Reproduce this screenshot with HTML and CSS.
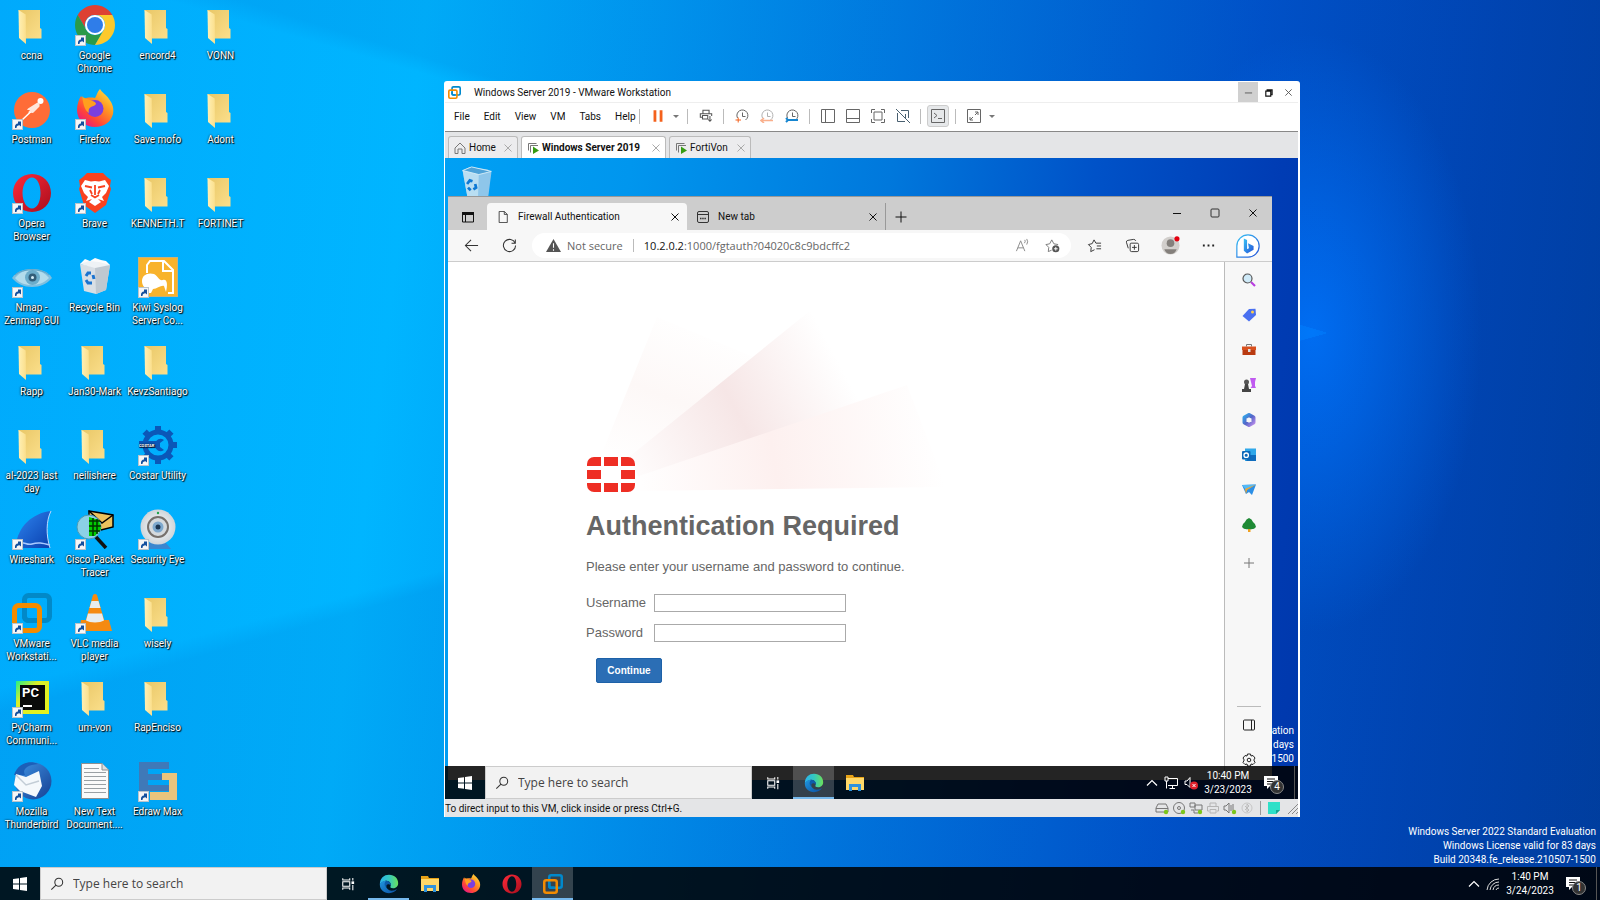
FILE: index.html
```html
<!DOCTYPE html>
<html lang="en">
<head>
  <meta charset="UTF-8">
  <meta name="viewport" content="width=device-width, initial-scale=1.0">
  <title>Desktop</title>
  <link rel="stylesheet" href="styles.css">
</head>
<body>
  <!-- Shared icons -->
  <svg class="sprite" aria-hidden="true">
    <defs>
      <linearGradient id="gFolder" x1="0" y1="0" x2="1" y2="1"><stop offset="0" stop-color="#e9c767"/><stop offset="1" stop-color="#fbdf8b"/></linearGradient>
      <linearGradient id="gFlap" x1="0" y1="0" x2="1" y2="0"><stop offset="0" stop-color="#fff0b5"/><stop offset="1" stop-color="#fbdf8c"/></linearGradient>
      <linearGradient id="gOpera" x1="0" y1="0" x2="1" y2="1"><stop offset="0" stop-color="#ff2b3a"/><stop offset="1" stop-color="#a80d1c"/></linearGradient>
      <linearGradient id="gFire" x1="1" y1="0" x2="0.2" y2="1"><stop offset="0" stop-color="#fff04a"/><stop offset="0.4" stop-color="#ff9a22"/><stop offset="0.75" stop-color="#ff4438"/><stop offset="1" stop-color="#e4158b"/></linearGradient>
      <linearGradient id="gFin" x1="0" y1="0" x2="1" y2="1"><stop offset="0" stop-color="#2f86f0"/><stop offset="1" stop-color="#0a3fae"/></linearGradient>
      <linearGradient id="gEdge1" x1="0" y1="0" x2="1" y2="0"><stop offset="0" stop-color="#2bb3ee"/><stop offset="0.5" stop-color="#34c9c0"/><stop offset="1" stop-color="#6be05a"/></linearGradient>
      <linearGradient id="gEdge2" x1="0" y1="0" x2="1" y2="1"><stop offset="0" stop-color="#1f97e0"/><stop offset="1" stop-color="#0c4fa0"/></linearGradient>
      <linearGradient id="gPy" x1="0" y1="0" x2="1" y2="1"><stop offset="0" stop-color="#21f08a"/><stop offset="0.35" stop-color="#d9ef2a"/><stop offset="1" stop-color="#e6f21c"/></linearGradient>
      <linearGradient id="gBird" x1="0" y1="0" x2="1" y2="1"><stop offset="0" stop-color="#3f95e6"/><stop offset="1" stop-color="#163f92"/></linearGradient>
      <linearGradient id="gBing" x1="0" y1="0" x2="1" y2="1"><stop offset="0" stop-color="#37c2f5"/><stop offset="1" stop-color="#2552d8"/></linearGradient>
      <linearGradient id="gOffice" x1="0" y1="0" x2="1" y2="1"><stop offset="0" stop-color="#33a4e8"/><stop offset="0.5" stop-color="#5465c8"/><stop offset="1" stop-color="#b58ae8"/></linearGradient>
      <radialGradient id="gCam"><stop offset="0" stop-color="#ffffff"/><stop offset="1" stop-color="#cfd5da"/></radialGradient>
    </defs>

    <symbol id="arrow" viewBox="0 0 11 11">
      <rect x="0.5" y="0.5" width="10" height="10" fill="#f6f6f6" stroke="#b9c4cc"/>
      <path d="M3 9C2.600 6 4 4.500 6 4.500V2.500H9V7.500L7.500 6.200C5.500 6.200 4.500 7 4.500 9Z" fill="#14509e"/>
    </symbol>
    <symbol id="folder" viewBox="0 0 40 40">
      <path d="M6.500 5H28V23L29.500 24V33.500H13Z" fill="url(#gFolder)"/>
      <path d="M6.500 5L13.700 9.500L14 39L7 33Z" fill="url(#gFlap)"/>
    </symbol>
    <symbol id="chrome" viewBox="0 0 40 40">
      <path d="M20 10H37.300A20 20 0 0 0 2.700 10L11.300 25A10 10 0 0 1 20 10Z" fill="#dd4033"/>
      <path d="M11.300 25L2.700 10A20 20 0 0 0 20 40L28.700 25A10 10 0 0 1 11.300 25Z" fill="#2a9a49"/>
      <path d="M28.700 25L20 40A20 20 0 0 0 37.300 10H20A10 10 0 0 1 28.700 25Z" fill="#fcc92d"/>
      <circle cx="20" cy="20" r="10" fill="#fff"/><circle cx="20" cy="20" r="8" fill="#2f7de9"/>
    </symbol>
    <symbol id="postman" viewBox="0 0 40 40">
      <circle cx="20" cy="21" r="18" fill="#ff6c37"/>
      <circle cx="28.500" cy="12" r="3" fill="#fff"/>
      <path d="M25.500 13.500L16 19.500L15 21L18 21L16 23.500L21 24L27.500 17.500V14.500Z" fill="#ffe6da"/>
      <path d="M18.500 23L9.500 31.500" stroke="#fff" stroke-width="1.500"/>
    </symbol>
    <symbol id="firefox" viewBox="0 0 40 40">
      <path d="M25 0C27 4 31 5 34 10C38 15 39 20 38 25C36 33 29 38 20 38C10 38 2 31 2 21C2 15 4 10 6 7C7 8 7 9 8 10C10 9 15 8 20 9C22 6 22 3 25 0Z" fill="url(#gFire)"/>
      <circle cx="20" cy="19.500" r="8.500" fill="#7a3fe0"/>
      <path d="M7 7C9 10 12 9 15 11C18 12 21 13 21 15C20 17 17 17 16 18C14 19 13 21 14 24C9 21 8 13 7 7Z" fill="#ffa01e"/>
    </symbol>
    <symbol id="opera" viewBox="0 0 40 40">
      <path fill-rule="evenodd" d="M20 1C9 1 1 9.500 1 20S9 39 20 39S39 30.500 39 20S31 1 20 1ZM20 4.500C25 4.500 28.500 11 28.500 20S25 35.500 20 35.500S10.500 29 10.500 20S15 4.500 20 4.500Z" fill="url(#gOpera)"/>
    </symbol>
    <symbol id="brave" viewBox="0 0 40 40">
      <path d="M12 0H28L32 4L36 7L35 13L36 16L31 32L20 40L9 32L4 16L5 13L4 7L8 4Z" fill="#f9421f"/>
      <path d="M10 7L16 8.500L20 8L24 8.500L30 7L34 13L31 20L27 24L29 28L23 26L26 29L20 33L14 29L17 26L11 28L13 24L9 20L6 13Z" fill="#fff"/>
      <path d="M10 13L17 14.500M30 13L23 14.500M20 12V22M16 22L20 24.500L24 22M15 17L17 21M25 17L23 21" stroke="#f9421f" stroke-width="1.800" fill="none"/>
    </symbol>
    <symbol id="nmap" viewBox="0 0 40 40">
      <path d="M0 21C5 14 12 12 20 12S36 14 40 21C35 27 28 30 20 30S5 27 0 21Z" fill="#7fbfdf"/>
      <path d="M3 21C9 14 14 13 20 13S32 15 37 21C32 26 26 28 20 28S8 27 3 21Z" fill="#b3dcec"/>
      <circle cx="20.500" cy="20.500" r="7.500" fill="#6cadcb"/><circle cx="20.500" cy="20.500" r="4" fill="#325d78"/><circle cx="20.500" cy="20.500" r="1.500" fill="#d6eef8"/>
      <path d="M3 18C10 11 30 11 37 18" stroke="#5fa3c4" fill="none"/>
    </symbol>
    <symbol id="bin" viewBox="0 0 40 40">
      <path d="M5 7L10 2L15 4L20 1L26 3L31 4L35 8Z" fill="#fbfcfd"/>
      <path d="M5 7L20 10L35 8L31 33L21 37L9 34Z" fill="#d9dfe5"/>
      <path d="M20 10L35 8L31 33L21 37Z" fill="#bfc8d0"/>
      <path d="M5 7L14 4L24 5L35 8L20 11Z" fill="#eef2f5"/>
      <g fill="none" stroke="#1b73cf" stroke-width="3"><path d="M11 19L13 16H16"/><path d="M18 18L19 22"/><path d="M17 26H13L11 23"/></g>
    </symbol>
    <symbol id="binEmpty" viewBox="0 0 40 40">
      <path d="M4 5L12 1L32 4L36 7L32 38H10Z" fill="#8ec6ea"/>
      <path d="M4 5L22 9L21 38H10Z" fill="#b9def2"/>
      <path d="M4 5L14 1L36 6L22 9.500Z" fill="#4fa3d8" stroke="#d8eef8"/>
      <g fill="none" stroke="#0c78d4" stroke-width="3"><path d="M9 20L12 16L15 17"/><path d="M18 20L19 24L16 26"/><path d="M13 27L10 24"/></g>
    </symbol>
    <symbol id="kiwi" viewBox="0 0 40 40">
      <rect x="0.500" y="0.500" width="39" height="39" fill="#f8b32c" stroke="#c8b27a"/>
      <path d="M9 16V8L12 4H26L35 13V36H30M25 4V14H35" fill="none" stroke="#fff" stroke-width="2"/>
      <path d="M4 24C4 18 10 15 16 17C20 19 21 24 25 23C29 22 30 27 28 35L26 29C23 28 19 32 15 32L13 36H10V32C6 31 4 28 4 24Z" fill="#fff"/>
    </symbol>
    <symbol id="wireshark" viewBox="0 0 40 40">
      <path d="M4 36C6 18 20 4 39 2C34 12 34 26 38 39H4Z" fill="url(#gFin)"/>
      <path d="M39 2C34 12 34 26 38 39" stroke="#bfdcff" fill="none"/>
      <path d="M4 35C12 31 14 37 20 35S30 34 38 36" stroke="#a8c9ff" stroke-width="1.500" fill="none"/>
    </symbol>
    <symbol id="tracer" viewBox="0 0 40 40">
      <path d="M14 2L38 6V18L14 24Z" fill="#ecc25e" stroke="#000" stroke-width="1.500"/>
      <path d="M14 2L27 14L38 6" fill="none" stroke="#000" stroke-width="1.500"/>
      <circle cx="14" cy="18" r="12" fill="#8bd0e6" stroke="#4c9ab5"/>
      <path d="M14 8L24 11L26 20L20 27H14Z" fill="#0c0"/>
      <path d="M14 12H25M14 17H26M14 22H25M18 9V27M22 10V25" stroke="#030" stroke-width="1.500"/>
      <path d="M21 28L31 39" stroke="#111" stroke-width="3.500"/>
    </symbol>
    <symbol id="eye" viewBox="0 0 40 40">
      <path d="M10 34H28L33 40H6Z" fill="#3a86cf"/>
      <circle cx="20" cy="18" r="17.500" fill="url(#gCam)"/>
      <circle cx="20" cy="18" r="10" fill="#d5dade" stroke="#76706c" stroke-width="2"/>
      <circle cx="20" cy="18" r="5.500" fill="#7da8ce"/><circle cx="20" cy="18" r="2.500" fill="#1b3552"/><circle cx="20" cy="4" r="1.200" fill="#1da34a"/>
    </symbol>
    <symbol id="vmware" viewBox="0 0 40 40">
      <rect x="12.500" y="2.500" width="25" height="25" rx="4" fill="none" stroke="var(--back, #0089cc)" stroke-width="5"/>
      <rect x="2.500" y="12.500" width="25" height="25" rx="4" fill="none" stroke="#f38b00" stroke-width="5"/>
      <path d="M12.500 18V23.500A4 4 0 0 0 16.500 27.500H23" fill="none" stroke="var(--back, #0089cc)" stroke-width="5"/>
    </symbol>
    <symbol id="vlc" viewBox="0 0 40 40">
      <path d="M6 27H34L37 38H4Z" fill="#f58a12"/>
      <path d="M18 2C19 0.500 21 0.500 22 2L30 30C26 34 14 34 10 30Z" fill="#f58a12"/>
      <path d="M16.500 8H23.500L25.500 15H14.500ZM13 20.500H27L29 27.500C25 30 15 30 11 27.500Z" fill="#e8edf0"/>
    </symbol>
    <symbol id="thunderbird" viewBox="0 0 40 40">
      <circle cx="21" cy="20" r="18.500" fill="url(#gBird)"/>
      <path d="M2 14C6 2 18 -1 26 3C14 4 10 9 13 14Z" fill="#1c5fb8"/>
      <path d="M4 13L14 16L27 10L30 25L24 36L8 30L2 24Z" fill="#f5f9fc"/>
      <path d="M4 14L14 24L27 20" fill="none" stroke="#c3cdd6" stroke-width="1.500"/>
    </symbol>
    <symbol id="textdoc" viewBox="0 0 40 40">
      <path d="M6.500 2.500H27L33.500 9V37.500H6.500Z" fill="#fafafa" stroke="#8c8f91"/>
      <path d="M27 2.500V9H33.500" fill="#ddd" stroke="#8c8f91"/>
      <path d="M9 7.500H24M9 11.500H31M9 15.500H31M9 19.500H31M9 23.500H31M9 27.500H31M9 31.500H31" stroke="#9aa0a4"/>
    </symbol>
    <symbol id="edraw" viewBox="0 0 40 40">
      <path d="M1 1H31V8H10V13H24V19H10V24H31V30H1Z" fill="#3f79b8"/>
      <path d="M24 12H39V39H12V31H31V19H24Z" fill="#eac47c"/>
    </symbol>
    <symbol id="winlogo" viewBox="0 0 16 16">
      <path d="M1 3L7 2.200V7.500H1ZM8 2L15 1V7.500H8ZM1 8.500H7V13.800L1 13ZM8 8.500H15V15L8 14Z" fill="#fff"/>
    </symbol>
    <symbol id="lens" viewBox="0 0 16 16">
      <circle cx="10" cy="6" r="4.500" fill="none" stroke="#333" stroke-width="1.200"/><path d="M6.800 9.200L1.500 14.500" stroke="#333" stroke-width="1.200"/>
    </symbol>
    <symbol id="taskview" viewBox="0 0 16 16">
      <path d="M2 1.500V3.500H10V1.500M2 14.500V12.500H10V14.500M2 5.500H10V10.500H2ZM13.500 1V4M13.500 9V15" fill="none" stroke="#fff" stroke-width="1.200"/><rect x="12" y="5" width="3" height="3" fill="#fff"/>
    </symbol>
    <symbol id="edge" viewBox="0 0 24 24">
      <path d="M1 13C1 5 6 1 12 1C19 1 23 6 23 11C23 15 20 17 17 17C14 17 13 16 14 14C15 12 13 8 9 8C5 8 2 11 1 13Z" fill="url(#gEdge1)"/>
      <path d="M1 13C2 9 5 8 9 8C7 10 7 19 15 20C18 20 20 19 21.500 18C20 21 16 23 12 23C6 23 1 19 1 13Z" fill="url(#gEdge2)"/>
      <path d="M9 8C13 8 15 12 14 14C12 11 8 12 9 16C6 14 6 10 9 8Z" fill="#0d5cab"/>
    </symbol>
    <symbol id="explorer" viewBox="0 0 20 18">
      <path d="M1 1H8L9 3H19V16H1Z" fill="#e8a317"/><path d="M1 4H19V16H1Z" fill="#ffd868"/>
      <path d="M4 17V10H16V17H13V13H7V17Z" fill="#2f93dc"/>
    </symbol>
    <symbol id="chevron" viewBox="0 0 12 12"><path d="M1 8.500L6 3.500L11 8.500" fill="none" stroke="#fff" stroke-width="1.200"/></symbol>
    <symbol id="note" viewBox="0 0 14 14">
      <path d="M0 0H14V10H6L3 13V10H0Z" fill="#fff"/><path d="M3 3H11M3 5.500H11M3 8H8" stroke="#111"/>
    </symbol>
    <symbol id="cross" viewBox="0 0 10 10"><path d="M1.500 1.500L8.500 8.500M8.500 1.500L1.500 8.500" stroke="currentColor" fill="none"/></symbol>
    <symbol id="minus" viewBox="0 0 10 10"><path d="M1 5.500H9" stroke="currentColor"/></symbol>
    <symbol id="plus" viewBox="0 0 12 12"><path d="M0.500 6H11.500M6 0.500V11.500" stroke="currentColor"/></symbol>
    <symbol id="vmrun" viewBox="0 0 12 12">
      <path d="M1.500 8.500V1.500H9.500M3.500 10.500V3.500H11" fill="none" stroke="#777"/><path d="M6 4.500L12 8.500L6 12Z" fill="#359b12"/>
    </symbol>
    <symbol id="clock" viewBox="0 0 14 14">
      <path d="M2.500 9A5.500 5.500 0 1 1 10.500 11" fill="none" stroke="currentColor"/><path d="M7.500 3.500V7.500H10.500" fill="none" stroke="currentColor"/>
    </symbol>
  </svg>

  <main class="desktop">
    <ul class="icons">
      <li><svg><use href="#folder"/></svg><span>ccna</span></li>
      <li><svg><use href="#postman"/></svg><svg class="arrow"><use href="#arrow"/></svg><span>Postman</span></li>
      <li><svg><use href="#opera"/></svg><svg class="arrow"><use href="#arrow"/></svg><span>Opera<br>Browser</span></li>
      <li><svg><use href="#nmap"/></svg><svg class="arrow"><use href="#arrow"/></svg><span>Nmap -<br>Zenmap GUI</span></li>
      <li><svg><use href="#folder"/></svg><span>Rapp</span></li>
      <li><svg><use href="#folder"/></svg><span>al-2023 last<br>day</span></li>
      <li><svg><use href="#wireshark"/></svg><svg class="arrow"><use href="#arrow"/></svg><span>Wireshark</span></li>
      <li class="faded"><svg><use href="#vmware"/></svg><svg class="arrow"><use href="#arrow"/></svg><span>VMware<br>Workstati...</span></li>
      <li>
        <svg viewBox="0 0 40 40">
          <rect x="4" y="4" width="33" height="33" fill="url(#gPy)"/>
          <rect x="8" y="8" width="25" height="25" fill="#0a0c0a"/>
          <text x="10" y="20" class="pc-text">PC</text>
          <path d="M11 29H20" stroke="#fff" stroke-width="2"/>
        </svg>
        <svg class="arrow"><use href="#arrow"/></svg><span>PyCharm<br>Communi...</span>
      </li>
      <li><svg><use href="#thunderbird"/></svg><svg class="arrow"><use href="#arrow"/></svg><span>Mozilla<br>Thunderbird</span></li>

      <li><svg><use href="#chrome"/></svg><svg class="arrow"><use href="#arrow"/></svg><span>Google<br>Chrome</span></li>
      <li><svg><use href="#firefox"/></svg><svg class="arrow"><use href="#arrow"/></svg><span>Firefox</span></li>
      <li><svg><use href="#brave"/></svg><svg class="arrow"><use href="#arrow"/></svg><span>Brave</span></li>
      <li><svg><use href="#bin"/></svg><span>Recycle Bin</span></li>
      <li><svg><use href="#folder"/></svg><span>Jan30-Mark</span></li>
      <li><svg><use href="#folder"/></svg><span>neilishere</span></li>
      <li><svg><use href="#tracer"/></svg><svg class="arrow"><use href="#arrow"/></svg><span>Cisco Packet<br>Tracer</span></li>
      <li><svg><use href="#vlc"/></svg><svg class="arrow"><use href="#arrow"/></svg><span>VLC media<br>player</span></li>
      <li><svg><use href="#folder"/></svg><span>um-von</span></li>
      <li><svg><use href="#textdoc"/></svg><span>New Text<br>Document....</span></li>

      <li><svg><use href="#folder"/></svg><span>encord4</span></li>
      <li><svg><use href="#folder"/></svg><span>Save mofo</span></li>
      <li><svg><use href="#folder"/></svg><span>KENNETH.T</span></li>
      <li><svg><use href="#kiwi"/></svg><svg class="arrow"><use href="#arrow"/></svg><span>Kiwi Syslog<br>Server Co...</span></li>
      <li><svg><use href="#folder"/></svg><span>KevzSantiago</span></li>
      <li>
        <svg viewBox="0 0 40 40">
          <circle cx="20" cy="20" r="13" fill="none" stroke="#0b57b8" stroke-width="5"/>
          <path d="M20 1V6M20 34V39M34 20H39M6.600 6.600L10 10M33.400 6.600L30 10M33.400 33.400L30 30M6.600 33.400L10 30" stroke="#0b57b8" stroke-width="6"/>
          <path d="M26 15A6 6 0 1 0 26 25L22 22V18Z" fill="#0b57b8"/>
          <rect x="1" y="16" width="18" height="7" fill="#0b57b8"/>
          <text x="1" y="22" class="costar-text">COSTAR</text>
        </svg>
        <svg class="arrow"><use href="#arrow"/></svg><span>Costar Utility</span>
      </li>
      <li><svg><use href="#eye"/></svg><svg class="arrow"><use href="#arrow"/></svg><span>Security Eye</span></li>
      <li><svg><use href="#folder"/></svg><span>wisely</span></li>
      <li><svg><use href="#folder"/></svg><span>RapEnciso</span></li>
      <li><svg><use href="#edraw"/></svg><svg class="arrow"><use href="#arrow"/></svg><span>Edraw Max</span></li>

      <li><svg><use href="#folder"/></svg><span>VONN</span></li>
      <li><svg><use href="#folder"/></svg><span>Adont</span></li>
      <li><svg><use href="#folder"/></svg><span>FORTINET</span></li>
    </ul>

    <p class="watermark">Windows Server 2022 Standard Evaluation<br>Windows License valid for 83 days<br>Build 20348.fe_release.210507-1500</p>

    <!-- VMware window -->
    <section class="vm">
      <header class="vm-title">
        <svg class="vm-logo"><use href="#vmware"/></svg>
        <h2>Windows Server 2019 - VMware Workstation</h2>
        <div class="vm-controls">
          <button class="hover" aria-label="Minimize"><svg><use href="#minus"/></svg></button>
          <button aria-label="Restore"><svg viewBox="0 0 10 10"><path d="M2 3.500H7.500V9H2ZM3.500 3V2H9V7.500H8" fill="none" stroke="#111" stroke-width="1.300"/></svg></button>
          <button aria-label="Close"><svg><use href="#cross"/></svg></button>
        </div>
      </header>

      <nav class="vm-menu">
        <div class="menu-items">
          <button>File</button><button>Edit</button><button>View</button><button>VM</button><button>Tabs</button><button>Help</button>
        </div>
        <div class="tools">
          <button aria-label="Suspend"><svg viewBox="0 0 16 16"><path d="M4.500 1.500V14.500M11.500 1.500V14.500" stroke="#f4611c" stroke-width="3.200"/></svg></button>
          <button class="caret" aria-label="Power options"></button>
        </div>
        <div class="tools">
          <button aria-label="Send keys"><svg viewBox="0 0 16 16"><path d="M4.500 5V1.500H11.500V5M4 9.500H1.500V5.500H14.500V8M4 7.500H10V11.500H4ZM12.500 8V14M10.500 12L12.500 14L14.500 12" fill="none" stroke="#555" stroke-width="1.200"/></svg></button>
        </div>
        <div class="tools">
          <button aria-label="Take snapshot"><svg viewBox="0 0 14 14"><use href="#clock"/><path d="M0.500 11H6M3.200 8.500V13.500" stroke="#f4611c"/></svg></button>
          <button class="off" aria-label="Revert snapshot"><svg viewBox="0 0 14 14"><use href="#clock"/><path d="M1 11.500H13M4 9L1 11.500L4 14" stroke="#f4611c" stroke-width="1.500" fill="none"/></svg></button>
          <button aria-label="Manage snapshots"><svg viewBox="0 0 14 14"><use href="#clock"/><path d="M1 9L3 11L1 13M3 11H13" stroke="#1585d0" stroke-width="2" fill="none"/></svg></button>
        </div>
        <div class="tools">
          <button aria-label="Library"><svg viewBox="0 0 14 14"><path d="M0.500 0.500H13.500V13.500H0.500ZM4.500 0.500V13.500" fill="none" stroke="currentColor"/></svg></button>
          <button aria-label="Thumbnail bar"><svg viewBox="0 0 14 14"><path d="M0.500 0.500H13.500V13.500H0.500ZM0.500 9.500H13.500" fill="none" stroke="currentColor"/></svg></button>
          <button aria-label="Full screen"><svg viewBox="0 0 14 14"><path d="M3 3H11V11H3ZM0.500 4V0.500H4M10 0.500H13.500V4M13.500 10V13.500H10M4 13.500H0.500V10" fill="none" stroke="currentColor"/></svg></button>
          <button aria-label="Unity"><svg viewBox="0 0 14 14"><path d="M5 1.500H12.500V9M1.500 4V12.500H9M9.500 5V9M0 0L14 14" fill="none" stroke="#496070"/></svg></button>
        </div>
        <div class="tools">
          <button class="pressed" aria-label="Console view"><svg viewBox="0 0 14 14"><path d="M0.500 0.500H13.500V13.500H0.500ZM3 4L6 6.500L3 9M7 9.500H11" fill="none" stroke="currentColor"/></svg></button>
        </div>
        <div class="tools">
          <button aria-label="Stretch guest"><svg viewBox="0 0 14 14"><path d="M0.500 0.500H13.500V13.500H0.500ZM3 11L6 8M8 6L11 3M8 3H11V6M3 8V11H6" fill="none" stroke="currentColor"/></svg></button>
          <button class="caret" aria-label="Stretch options"></button>
        </div>
      </nav>

      <div class="vm-tabs">
        <div class="vm-tab"><svg viewBox="0 0 12 12"><path d="M1 6L6 1L11 6V11.500H8V7H4V11.500H1Z" fill="none" stroke="#777"/></svg><span>Home</span><button aria-label="Close"><svg><use href="#cross"/></svg></button></div>
        <div class="vm-tab current"><svg><use href="#vmrun"/></svg><span>Windows Server 2019</span><button aria-label="Close"><svg><use href="#cross"/></svg></button></div>
        <div class="vm-tab"><svg><use href="#vmrun"/></svg><span>FortiVon</span><button aria-label="Close"><svg><use href="#cross"/></svg></button></div>
      </div>

      <!-- Guest screen -->
      <div class="guest">
        <svg class="guest-bin"><use href="#binEmpty"/></svg>
        <p class="guest-mark">ation<br>days<br>-1500</p>

        <div class="browser">
          <div class="strip">
            <button class="tab-menu" aria-label="Tab actions"><svg viewBox="0 0 12 12"><path d="M0.500 1.500H11.500V11H0.500ZM3.500 4V11" fill="none" stroke="#111"/><path d="M0 1H12V4H0Z" fill="#111"/></svg></button>
            <div class="tab current"><svg viewBox="0 0 12 14"><path d="M1.500 0.500H7.500L11 4V13.500H1.500ZM7.500 0.500V4H11" fill="none" stroke="#333"/></svg><span>Firewall Authentication</span><button aria-label="Close tab"><svg><use href="#cross"/></svg></button></div>
            <div class="tab"><svg viewBox="0 0 12 12"><rect x="0.500" y="0.500" width="11" height="11" rx="1.500" fill="none" stroke="#333"/><path d="M0.500 3.500H11.500" stroke="#333"/><path d="M3 7.500H9" stroke="#333" stroke-width="1.500" stroke-dasharray="1.500 0.700"/></svg><span>New tab</span><button aria-label="Close tab"><svg><use href="#cross"/></svg></button></div>
            <button class="new-tab" aria-label="New tab"><svg><use href="#plus"/></svg></button>
            <div class="win-controls">
              <button aria-label="Minimize"><svg><use href="#minus"/></svg></button>
              <button aria-label="Maximize"><svg viewBox="0 0 10 10"><rect x="1" y="1" width="8" height="8" rx="1" fill="none" stroke="#333"/></svg></button>
              <button aria-label="Close"><svg><use href="#cross"/></svg></button>
            </div>
          </div>

          <div class="nav">
            <button aria-label="Back"><svg viewBox="0 0 16 16"><path d="M15 8H1.500M7.500 2L1.500 8L7.500 14" fill="none" stroke="#333" stroke-width="1.100"/></svg></button>
            <button aria-label="Refresh"><svg viewBox="0 0 16 16"><path d="M14 5.500A6.500 6.500 0 1 0 14.500 8M14.200 1.500V5.500H10.200" fill="none" stroke="#333" stroke-width="1.100"/></svg></button>
            <div class="address">
              <svg viewBox="0 0 14 14"><path d="M7 1L14 13H0Z" fill="#555"/><path d="M7 5V9M7 10.500V12" stroke="#fff"/></svg>
              <span class="insecure">Not secure</span>
              <span class="url"><b>10.2.0.2</b>:1000/fgtauth?04020c8c9bdcffc2</span>
              <button aria-label="Read aloud"><svg viewBox="0 0 16 16"><path d="M1.500 14L6 3L10.500 14M3 10.500H9M10 5.500Q11.500 4 10.500 2M12.500 7Q14.500 4 12.500 1" fill="none" stroke="#888"/></svg></button>
              <button aria-label="Add favorite"><svg viewBox="0 0 16 16"><path d="M7 13L3.500 14.500L4 10L1 7L5 6.200L7.200 2L9.500 6.200L14 7" fill="none" stroke="#777"/><circle cx="11.500" cy="11.500" r="3.800" fill="#555"/><path d="M9.500 11.500H13.500M11.500 9.500V13.500" stroke="#fff"/></svg></button>
            </div>
            <button aria-label="Favorites"><svg viewBox="0 0 16 16"><path d="M8 12.500L4 14.500L4.500 10L1.500 7L5.500 6L7.500 2L9.500 5.500H15M10.500 8.500H15M10 11.500H15" fill="none" stroke="#333"/></svg></button>
            <button aria-label="Collections"><svg viewBox="0 0 16 16"><path d="M6.500 5.500H13Q14.500 5.500 14.500 7V13Q14.500 14.500 13 14.500H7Q5.500 14.500 5.500 13V6.500Q5.500 5.500 6.500 5.500ZM10 7.500V12.500M7.500 10H12.500M3.500 11L1.500 4.500Q1.200 3 3 2.500L9 1.500Q11 1.500 11.500 3" fill="none" stroke="#333"/></svg></button>
            <button class="profile" aria-label="Profile"><svg viewBox="0 0 20 20"><circle cx="10" cy="10" r="9.500" fill="#d2cfcc"/><circle cx="10" cy="7.500" r="4" fill="#84807c"/><path d="M3.500 14H16.500Q15 19 10 19T3.500 14Z" fill="#84807c"/><circle cx="16.800" cy="3" r="2.700" fill="#e3000f"/></svg></button>
            <button aria-label="More"><svg viewBox="0 0 16 16"><path d="M2 8H4M7 8H9M12 8H14" stroke="#222" stroke-width="2"/></svg></button>
            <button class="bing" aria-label="Discover"><svg viewBox="0 0 28 28"><path d="M2 26V14A12 12 0 1 1 14 26Z" fill="#fff" stroke="url(#gBing)" stroke-width="1.300"/><path d="M9.500 6L13 7.500V17.500L9.500 19ZM14 11L20 14V18L13 22L9.500 19L15 16.500Z" fill="url(#gBing)"/></svg></button>
          </div>

          <div class="view">
            <div class="page">
              <svg class="hero" viewBox="0 0 370 190">
                <defs>
                  <linearGradient id="ray1" gradientUnits="userSpaceOnUse" x1="50" y1="170" x2="110" y2="20"><stop offset="0" stop-color="#fff"/><stop offset="0.500" stop-color="#fdf8f7"/><stop offset="1" stop-color="#fff"/></linearGradient>
                  <linearGradient id="ray2" gradientUnits="userSpaceOnUse" x1="50" y1="162" x2="250" y2="55"><stop offset="0" stop-color="#fefbfb"/><stop offset="0.500" stop-color="#f6e6e6"/><stop offset="0.750" stop-color="#fbf3f3"/><stop offset="1" stop-color="#fff"/></linearGradient>
                  <linearGradient id="ray3" gradientUnits="userSpaceOnUse" x1="55" y1="180" x2="350" y2="130"><stop offset="0" stop-color="#fffefe"/><stop offset="0.450" stop-color="#fdf0ef"/><stop offset="1" stop-color="#fff"/></linearGradient>
                  <clipPath id="round"><rect x="1" y="155" width="48" height="35" rx="7"/></clipPath>
                </defs>
                <path d="M16 151L71 15L180 60L66 170Z" fill="url(#ray1)"/>
                <path d="M43 155L225 8L280 105L55 180Z" fill="url(#ray2)"/>
                <path d="M50 175L321 83L360 185L50 189Z" fill="url(#ray3)"/>
                <path clip-path="url(#round)" d="M1 155H15V164H1ZM18 155H32V164H18ZM35 155H49V164H35ZM1 168H15V177H1ZM35 168H49V177H35ZM1 181H15V190H1ZM18 181H32V190H18ZM35 181H49V190H35Z" fill="#ee2e24"/>
              </svg>
              <h1>Authentication Required</h1>
              <p>Please enter your username and password to continue.</p>
              <form>
                <div class="field"><label for="username">Username</label><input type="text" id="username"></div>
                <div class="field"><label for="password">Password</label><input type="password" id="password"></div>
                <button type="button">Continue</button>
              </form>
            </div>
            <aside class="side">
              <button aria-label="Search"><svg viewBox="0 0 14 14"><path d="M9 9L13 13" stroke="#b83de0" stroke-width="2.200"/><circle cx="5.500" cy="5.500" r="4.500" fill="#cfeaf8" stroke="#555" stroke-width="1.200"/></svg></button>
              <button aria-label="Shopping"><svg viewBox="0 0 14 14"><path d="M7 1L13.500 0.800L14 7L7 13.500L0.500 8Z" fill="#4a70f0"/><circle cx="10.500" cy="4" r="1.500" fill="#ffcf48"/></svg></button>
              <button aria-label="Tools"><svg viewBox="0 0 14 14"><path d="M4.500 3.500V1.500H9.500V3.500" fill="none" stroke="#777"/><path d="M0 3.500H14V7H0Z" fill="#d8501e"/><path d="M0.500 7H13.500V12H0.500Z" fill="#b93a10"/><rect x="6" y="6" width="2.500" height="3" fill="#ddd"/></svg></button>
              <button aria-label="Games"><svg viewBox="0 0 14 14"><circle cx="4.500" cy="4" r="2.500" fill="#555"/><path d="M3 6H6L7 11H9V14H0V11H2Z" fill="#444"/><path d="M8 0H14L13 4V8L14 10H8.500L10 8L9 4Z" fill="#c05af0"/></svg></button>
              <button aria-label="Microsoft 365"><svg viewBox="0 0 14 14"><path d="M7 2L11.500 4.500V9.500L7 12L2.500 9.500V4.500Z" fill="none" stroke="url(#gOffice)" stroke-width="4" stroke-linejoin="round"/></svg></button>
              <button aria-label="Outlook"><svg viewBox="0 0 14 14"><rect x="3" y="0.500" width="11" height="12.500" fill="#2fa8ea"/><path d="M8 7H14V13H4Z" fill="#0f6cbd"/><rect x="0" y="3" width="8.500" height="8.500" rx="1" fill="#0d67b8"/><circle cx="4.200" cy="7.200" r="2.200" fill="none" stroke="#fff" stroke-width="1.300"/></svg></button>
              <button aria-label="Drop"><svg viewBox="0 0 14 14"><path d="M0 2L14 1.500L10 12L7 9L4 11Z" fill="#2c8fe6"/><path d="M0 2L14 1.500L4 7Z" fill="#55b9f5"/><path d="M14 1.500L5 7L4 11L3 6Z" fill="#f4a62a"/></svg></button>
              <button aria-label="E-tree"><svg viewBox="0 0 14 14"><path d="M6 10H8.500V14H6Z" fill="#f0a020"/><path d="M7 0Q10 1 11 4Q14 6 14 9Q12 12 7 11Q2 12 0 9Q0 6 3 4Q4 1 7 0Z" fill="#1f8a35"/></svg></button>
              <button class="add" aria-label="Customize"><svg viewBox="0 0 14 14"><path d="M2 7H12M7 2V12" stroke="#777"/></svg></button>
              <div class="side-end">
                <button aria-label="Hide sidebar"><svg viewBox="0 0 14 14"><rect x="1.500" y="2" width="11" height="10" rx="1" fill="none" stroke="#222"/><path d="M9.500 2V12" stroke="#222"/></svg></button>
                <button aria-label="Settings"><svg viewBox="0 0 14 14"><path d="M5.500 1H8.500L9 3L11 2.500L13 5L11.800 7L13 9.500L11 11.500L9 11L8.500 13H5.500L5 11L3 11.500L1 9.500L2.200 7L1 5L3 2.500L5 3Z" fill="none" stroke="#222"/><circle cx="7" cy="7" r="1.800" fill="none" stroke="#222"/></svg></button>
              </div>
            </aside>
          </div>
        </div>

        <div class="taskbar">
          <button class="start" aria-label="Start"><svg><use href="#winlogo"/></svg></button>
          <label class="search"><svg><use href="#lens"/></svg><input type="text" placeholder="Type here to search"></label>
          <button class="app" aria-label="Task view"><svg class="small"><use href="#taskview"/></svg></button>
          <button class="app active" aria-label="Edge"><svg><use href="#edge"/></svg></button>
          <button class="app" aria-label="File Explorer"><svg><use href="#explorer"/></svg></button>
          <div class="tray">
            <svg class="up"><use href="#chevron"/></svg>
            <svg viewBox="0 0 14 14"><path d="M4 2.500H13.500V9.500H4M1 1H4V5H1ZM2.500 5V12.500M8.500 9.500V12.500M5.500 12.500H11" fill="none" stroke="#fff"/></svg>
            <svg viewBox="0 0 14 14"><path d="M1 5H3L6 1.500V11.500L3 8.500H1Z" fill="none" stroke="#fff"/><circle cx="10" cy="9.500" r="4" fill="#e0202c"/><path d="M8.500 8L11.500 11M11.500 8L8.500 11" stroke="#fff"/></svg>
            <time>10:40 PM<br>3/23/2023</time>
            <div class="notes"><svg><use href="#note"/></svg><span>4</span></div>
          </div>
        </div>
      </div>

      <footer class="vm-status">
        <span>To direct input to this VM, click inside or press Ctrl+G.</span>
        <div class="devices">
          <svg viewBox="0 0 14 14"><path d="M3 3H11L13 7V11H1V7ZM1 7.500H13" fill="none" stroke="#777"/><circle cx="11" cy="11" r="2.200" fill="#7cc61a"/></svg>
          <svg viewBox="0 0 14 14"><circle cx="7" cy="7" r="5.500" fill="none" stroke="#777"/><circle cx="7" cy="7" r="1.500" fill="none" stroke="#777"/><circle cx="11" cy="11" r="2.200" fill="#7cc61a"/></svg>
          <svg viewBox="0 0 14 14"><path d="M1 2H6V6H1ZM6 4H13V9H6ZM2 9H5V12H9" fill="none" stroke="#777"/><circle cx="11" cy="11" r="2.200" fill="#7cc61a"/></svg>
          <svg viewBox="0 0 14 14"><path d="M4 5V2H10V5M3 10H1.500V5.500H12.500V10H11M4 8.500H10V12H4Z" fill="none" stroke="#b4b4b4"/></svg>
          <svg viewBox="0 0 14 14"><path d="M1 5H3L6 2V12L3 9H1ZM8 4V10M10 3V9" fill="none" stroke="#777"/><circle cx="11" cy="11" r="2.200" fill="#7cc61a"/></svg>
          <svg viewBox="0 0 14 14"><circle cx="7" cy="7" r="5" fill="none" stroke="#c6c6c6"/><path d="M5 5L9 9L7 11V3L9 5L5 9" fill="none" stroke="#bbb"/></svg>
          <svg class="message" viewBox="0 0 14 14"><path d="M1 1H13V9L9 13H1Z" fill="#2fe0c8"/><path d="M13 9H9V13Z" fill="#17a592"/></svg>
          <svg class="grip" viewBox="0 0 10 14"><path d="M0 13L10 3M4 13L10 7M8 13L10 11" stroke="#888"/></svg>
        </div>
      </footer>
    </section>
  </main>

  <div class="taskbar">
    <button class="start" aria-label="Start"><svg><use href="#winlogo"/></svg></button>
    <label class="search"><svg><use href="#lens"/></svg><input type="text" placeholder="Type here to search"></label>
    <button class="app" aria-label="Task view"><svg class="small"><use href="#taskview"/></svg></button>
    <button class="app running" aria-label="Edge"><svg><use href="#edge"/></svg></button>
    <button class="app" aria-label="File Explorer"><svg><use href="#explorer"/></svg></button>
    <button class="app" aria-label="Firefox"><svg><use href="#firefox"/></svg></button>
    <button class="app" aria-label="Opera"><svg><use href="#opera"/></svg></button>
    <button class="app active" aria-label="VMware"><svg><use href="#vmware"/></svg></button>
    <div class="tray">
      <svg class="up"><use href="#chevron"/></svg>
      <svg viewBox="0 0 14 14"><path d="M1 13A12 12 0 0 1 13 2M4 13A9 9 0 0 1 13 5M7 13A6 6 0 0 1 13 8M10 13A3 3 0 0 1 13 11" fill="none" stroke="#ddd"/></svg>
      <time>1:40 PM<br>3/24/2023</time>
      <div class="notes"><svg><use href="#note"/></svg><span>1</span></div>
    </div>
  </div>
</body>
</html>
```

FILE: styles.css
```css
* {
  box-sizing: border-box;
}
body {
  margin: 0;
  min-height: 100vh;
  display: flex;
  flex-direction: column;
  overflow: hidden;
  font-family: Roboto, "Open Sans", sans-serif;
  font-size: 10px;
  line-height: 13px;
  color: #111;
  background:
    conic-gradient(at 83% 37%, rgba(0, 40, 140, 0.07) 254deg, rgba(0, 200, 255, 0.06) 255deg 286deg, rgba(0, 40, 140, 0.07) 287deg),
    radial-gradient(ellipse 170px 300px at 82% 37%, rgba(0, 118, 255, 0.9), transparent),
    linear-gradient(97deg, #00a8fc 0%, #00b4ff 25%, #009cf4 38%, #0077e0 56%, #0054cc 74%, #0046b4 88%, #003f9f 100%);
}
p, h1, h2, ul {
  margin: 0;
  padding: 0;
}
button {
  display: flex;
  align-items: center;
  justify-content: center;
  flex-shrink: 0;
  padding: 0;
  border: none;
  background: none;
  font: inherit;
  color: inherit;
}
svg {
  display: block;
  flex-shrink: 0;
}
.sprite {
  position: absolute;
  width: 0;
  height: 0;
}
.costar-text {
  font-size: 4px;
  font-weight: bold;
  fill: #fff;
}
.pc-text {
  font-size: 13px;
  font-weight: bold;
  fill: #fff;
}

/* Desktop */
.desktop {
  position: relative;
  flex: 1;
}
.icons {
  display: grid;
  grid-auto-flow: column;
  grid-template-rows: repeat(10, 84px);
  grid-auto-columns: 63px;
  justify-content: start;
  list-style: none;
}
.icons li {
  position: relative;
  display: flex;
  flex-direction: column;
  align-items: center;
  gap: 4px;
  padding-top: 5px;
  color: #fff;
  text-align: center;
  white-space: nowrap;
  line-height: 13px;
  text-shadow: 1px 1px 1px #000, 0 0 2px #000;
}
.icons svg {
  width: 40px;
  height: 40px;
}
.icons .arrow {
  position: absolute;
  left: 12px;
  top: 35px;
  width: 11px;
  height: 11px;
}
.icons .faded {
  --back: #0289c8;
}
.watermark {
  position: absolute;
  right: 4px;
  bottom: 0;
  color: #fff;
  text-align: right;
  line-height: 14px;
}

/* VMware window */
.vm {
  position: absolute;
  top: 81px;
  right: 300px;
  bottom: 50px;
  left: 444px;
  display: flex;
  flex-direction: column;
  padding: 1px 2px 0 1px;
  background: #fff;
  border-radius: 3px 3px 0 0;
}
.vm-title {
  display: flex;
  align-items: center;
  height: 21px;
  padding-left: 3px;
  border-bottom: 1px solid #eee;
}
.vm-logo {
  width: 13px;
  height: 13px;
}
.vm-title h2 {
  flex: 1;
  padding-left: 13px;
  font-size: 10px;
  font-weight: normal;
}
.vm-controls {
  display: flex;
  align-self: stretch;
}
.vm-controls button {
  width: 20px;
  color: #555;
}
.vm-controls .hover {
  background: #d0d0d0;
}
.vm-controls svg {
  width: 9px;
  height: 9px;
}
.vm-menu {
  display: flex;
  align-items: center;
  height: 28px;
  padding: 0 0 2px 9px;
}
.menu-items {
  display: flex;
  gap: 14px;
  width: 185px;
}
.tools {
  display: flex;
  align-items: center;
  padding: 0 5px;
  border-left: 1px solid #bbb;
  height: 15px;
  color: #666;
}
.tools button {
  width: 25px;
  height: 22px;
}
.tools svg {
  width: 14px;
  height: 14px;
}
.tools .off {
  opacity: 0.5;
}
.tools .pressed {
  width: 22px;
  margin: 0 1px;
  background: #e6e8ea;
  border: 1px solid #ccc;
  border-radius: 3px;
}
.tools .caret {
  width: 12px;
}
.caret::after {
  content: "";
  border: 3px solid transparent;
  border-top-color: #777;
  border-bottom: none;
}
.vm-tabs {
  display: flex;
  align-items: flex-end;
  gap: 3px;
  height: 27px;
  padding-left: 3px;
  background: #e4e5e7;
  border-top: 1px solid #888;
}
.vm-tab {
  display: flex;
  align-items: center;
  gap: 3px;
  min-width: 70px;
  height: 22px;
  padding: 0 4px 0 5px;
  background: #ececee;
  border: 1px solid #bbb;
  border-bottom: none;
  border-radius: 3px 3px 0 0;
}
.vm-tab:last-child {
  min-width: 82px;
}
.vm-tab.current {
  min-width: 145px;
  background: #fff;
  font-weight: bold;
}
.vm-tab > svg {
  width: 12px;
  height: 12px;
}
.vm-tab button {
  margin-left: auto;
  color: #aaa;
}
.vm-tab button svg {
  width: 10px;
  height: 10px;
}
.vm-status {
  display: flex;
  align-items: center;
  justify-content: space-between;
  height: 18px;
  background: #e4e5e7;
}
.devices {
  display: flex;
  align-items: center;
  gap: 3px;
}
.devices svg {
  width: 14px;
  height: 14px;
}
.devices .message {
  width: 21px;
  padding-left: 6px;
  margin-left: 3px;
  border-left: 1px solid #999;
}
.devices .grip {
  width: 10px;
  margin-left: 4px;
}

/* Guest screen */
.guest {
  position: relative;
  flex: 1;
  overflow: hidden;
  display: flex;
  flex-direction: column;
  justify-content: flex-end;
  background: linear-gradient(97deg, #00a0f4 0%, #0096ee 20%, #0078dc 48%, #0052c8 70%, #003cb4 90%, #0038ac 100%);
}
.guest-bin {
  position: absolute;
  left: 14px;
  top: 8px;
  width: 36px;
  height: 36px;
}
.guest-mark {
  position: absolute;
  right: 4px;
  bottom: 33px;
  color: #fff;
  text-align: right;
  line-height: 14px;
}
.browser {
  position: absolute;
  top: 38px;
  right: 26px;
  bottom: 19px;
  left: 3px;
  display: flex;
  flex-direction: column;
  background: #f7f7f7;
}
.strip {
  display: flex;
  align-items: flex-end;
  height: 34px;
  background: #cdcdcd;
  border-top: 1px solid #999;
}
.strip svg {
  width: 12px;
  height: 12px;
}
.tab-menu {
  width: 39px;
  height: 26px;
}
.tab {
  display: flex;
  align-items: center;
  gap: 9px;
  width: 199px;
  height: 27px;
  padding: 0 7px 0 10px;
  border-right: 1px solid #999;
}
.tab.current {
  width: 200px;
  background: #f7f7f7;
  border: none;
  border-radius: 4px 4px 0 0;
}
.tab span {
  flex: 1;
}
.tab button svg {
  width: 10px;
  height: 10px;
}
.new-tab {
  width: 30px;
  height: 26px;
}
.win-controls {
  display: flex;
  align-self: flex-start;
  margin-left: auto;
}
.win-controls button {
  width: 38px;
  height: 32px;
}
.win-controls svg {
  width: 10px;
  height: 10px;
}
.nav {
  display: flex;
  align-items: center;
  height: 31px;
  padding: 0 3px 0 4px;
}
.nav button {
  width: 38px;
  height: 30px;
}
.nav svg {
  width: 15px;
  height: 15px;
}
.address {
  flex: 1;
  display: flex;
  align-items: center;
  height: 25px;
  margin: 0 4px;
  padding-left: 14px;
  background: #fff;
  border-radius: 13px;
  font-family: "Open Sans", "Noto Sans", sans-serif;
  font-size: 11px;
}
.address button {
  width: 30px;
}
.address button + button {
  margin-right: 4px;
}
.insecure {
  padding: 0 10px 0 6px;
  border-right: 1px solid #bbb;
  color: #666;
}
.url {
  flex: 1;
  padding-left: 10px;
  color: #666;
}
.url b {
  font-weight: normal;
  color: #111;
}
.nav .profile svg {
  width: 19px;
  height: 19px;
}
.nav .bing {
  width: 42px;
}
.nav .bing svg {
  width: 26px;
  height: 26px;
}
.view {
  flex: 1;
  display: flex;
  border-top: 1px solid #ccc;
}
.page {
  flex: 1;
  padding: 40px 20px 0 138px;
  background: #fff;
  border-right: 1px solid #bbb;
  font-family: "Liberation Sans", Arial, sans-serif;
  font-size: 13px;
  line-height: 16px;
  color: #666;
}
.hero {
  width: 370px;
  height: 190px;
}
.page h1 {
  margin-top: 18px;
  font-size: 27px;
  line-height: 32px;
}
.page p {
  margin-top: 17px;
}
.page form {
  margin-top: 13px;
}
.field {
  display: flex;
  align-items: center;
  height: 30px;
}
.field label {
  width: 68px;
}
.field input {
  width: 192px;
  height: 18px;
  border: 1px solid #aaa;
}
.page form button {
  width: 66px;
  height: 25px;
  margin: 10px 0 0 10px;
  background: #2b6eb5;
  border: 1px solid #1d61a8;
  border-radius: 2px;
  color: #fff;
  font-size: 10px;
  font-weight: bold;
}
.side {
  display: flex;
  flex-direction: column;
  align-items: center;
  width: 47px;
}
.side button {
  width: 24px;
  height: 35px;
}
.side svg {
  width: 14px;
  height: 14px;
}
.side .add {
  margin-top: 3px;
}
.side-end {
  margin-top: auto;
  padding-bottom: 3px;
  border-top: 1px solid #bbb;
}

/* Taskbars */
.taskbar {
  position: relative;
  display: flex;
  height: 33px;
  background: rgba(0, 0, 0, 0.86);
  color: #fff;
}
.start {
  width: 40px;
}
.start svg {
  width: 16px;
  height: 16px;
}
.search {
  display: flex;
  align-items: center;
  gap: 9px;
  width: 287px;
  padding-left: 9px;
  background: #f2f2f2;
  border: 1px solid #ccc;
}
.guest .search {
  width: 267px;
}
.search svg {
  width: 14px;
  height: 14px;
}
.search input {
  flex: 1;
  min-width: 0;
  padding: 0;
  border: none;
  background: none;
  font-family: "Open Sans", "Noto Sans", sans-serif;
  font-size: 12px;
}
.search input::placeholder {
  color: #444;
}
.app {
  width: 41px;
  border-bottom: 2px solid transparent;
  border-top: 2px solid transparent;
}
.app svg {
  width: 20px;
  height: 20px;
}
.app .small {
  width: 14px;
  height: 14px;
}
.running {
  border-bottom-color: #76b9ed;
}
.active {
  background: rgba(255, 255, 255, 0.2);
  border-bottom-color: #76b9ed;
}
.tray {
  display: flex;
  align-items: center;
  gap: 6px;
  margin-left: auto;
  margin-right: 3px;
  border-right: 1px solid #555;
}
.tray svg {
  width: 14px;
  height: 14px;
}
.tray .up {
  width: 12px;
  height: 12px;
}
.tray time {
  width: 48px;
  text-align: center;
  white-space: nowrap;
  line-height: 14px;
}
.notes {
  position: relative;
  width: 36px;
  padding-left: 6px;
}
.notes span {
  position: absolute;
  left: 12px;
  top: 4px;
  width: 14px;
  height: 14px;
  background: #333;
  border: 1px solid #888;
  border-radius: 50%;
  text-align: center;
  line-height: 12px;
}
```
